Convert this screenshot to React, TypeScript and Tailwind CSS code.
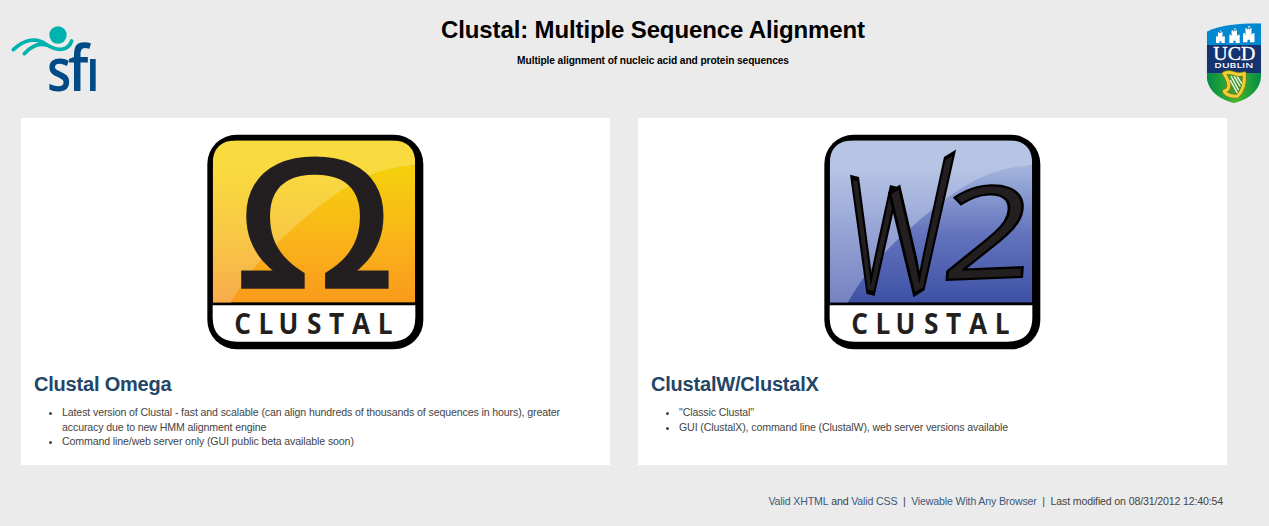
import type { ReactNode } from "react";

function SfiLogo() {
  return (
    <svg className="overflow-visible" width="120" height="90" viewBox="0 0 360 270" role="img" aria-label="sfi">
      <circle cx="174" cy="60" r="26" fill="#00b2ae" />
      <g fill="none" stroke="#00b2ae" strokeWidth="11" strokeLinecap="round">
        <path d="M40 104 C76 70 112 68 138 88 C172 111 204 108 215 78" />
        <path d="M73 116 C94 93 118 84 140 90" />
      </g>
      <g fill="#004b87" fontFamily="'Open Sans', sans-serif" fontWeight="600">
        <text transform="translate(141 229) scale(.83 1)" fontSize="180">s</text>
        <text transform="translate(204 229) scale(.9 1)" fontSize="188">f</text>
        <text transform="translate(258 229) scale(.82 1)" fontSize="180">ı</text>
      </g>
    </svg>
  );
}

function Tower({ x, y, scale }: { x: number; y: number; scale: number }) {
  return (
    <g transform={`translate(${x} ${y}) scale(${scale})`} fill="#fff">
      <path d="M0 10h4v2h4v-2h7v2h4v-2h4v18H14v-5H9v5H0z" />
      <path d="M5 0h3v2h6v-2h3v12H5z" />
      <path d="M11 -5l5 2-4 1v5h-1z" />
    </g>
  );
}

function UcdCrest() {
  return (
    <svg className="overflow-visible" width="79" height="95" viewBox="0 0 237 285" role="img" aria-label="UCD Dublin">
      <defs>
        <clipPath id="shield">
          <path d="M50 50 C92 30 145 25 213 25 V181 C213 222 180 253 132 264 C84 253 50 224 50 181 Z" />
        </clipPath>
        <linearGradient id="green" x1="0" x2="1">
          <stop offset="0" stopColor="#008c45" />
          <stop offset=".55" stopColor="#45b52e" />
          <stop offset="1" stopColor="#008c45" />
        </linearGradient>
      </defs>
      <g clipPath="url(#shield)">
        <rect x="50" y="20" width="163" height="75" fill="#0089d0" />
        <rect x="50" y="90" width="163" height="86" fill="#14336f" />
        <rect x="50" y="175" width="163" height="90" fill="url(#green)" />
      </g>
      <Tower x={78} y={52} scale={1.15} />
      <Tower x={118} y={46} scale={1.35} />
      <Tower x={159} y={40} scale={1.5} />
      <text x="70" y="136" fill="#fff" stroke="#fff" strokeWidth="1" fontFamily="'Liberation Serif', serif" fontSize="59" textLength="126" lengthAdjust="spacingAndGlyphs">UCD</text>
      <text x="73" y="158" fill="#fff" fontFamily="'Open Sans', sans-serif" fontWeight="600" fontSize="22" textLength="117" lengthAdjust="spacingAndGlyphs">DUBLIN</text>
      <g fill="none" strokeLinecap="round" strokeLinejoin="round">
        <path d="M102 176 C122 162 137 188 163 176 C165 205 157 230 143 243 C126 246 106 239 103 228 C120 226 122 204 102 176" fill="#3d9a35" stroke="#7d8214" strokeWidth="14" />
        <path d="M124 185L145 224M133 185L150 213M142 186L155 205M121 196L141 232" stroke="#f4f7e6" strokeWidth="4" />
        <path d="M102 176 C122 162 137 188 163 176 C165 205 157 230 143 243 C126 246 106 239 103 228 C120 226 122 204 102 176" stroke="#f3cf36" strokeWidth="9" />
      </g>
    </svg>
  );
}

type BadgeProps = {
  id: string;
  label: string;
  base: [string, string, string];
  gloss: [string, string, string];
  children: ReactNode;
};

function ClustalBadge({ id, label, base, gloss, children }: BadgeProps) {
  return (
    <svg className="ml-[179px] block overflow-visible" width="230" height="230" viewBox="0 0 690 690" role="img" aria-label={label}>
      <defs>
        <linearGradient id={`${id}-base`} x1="0" y1="0" x2="0" y2="1">
          <stop offset="0" stopColor={base[0]} />
          <stop offset=".5" stopColor={base[1]} />
          <stop offset="1" stopColor={base[2]} />
        </linearGradient>
        <linearGradient id={`${id}-gloss`} x1="0" y1="0" x2="0" y2="1">
          <stop offset=".15" stopColor={gloss[0]} />
          <stop offset=".55" stopColor={gloss[1]} />
          <stop offset="1" stopColor={gloss[2]} />
        </linearGradient>
        <clipPath id={`${id}-inner`}>
          <path d="M38 533 V118 Q38 46 110 46 H575 Q646 46 646 118 V533 Z" />
        </clipPath>
      </defs>
      <rect x="22" y="29" width="648" height="644" rx="88" fill="#000" />
      <path d="M38 541 H646 V577 Q646 650 572 650 H112 Q38 650 38 577 Z" fill="#fff" />
      <g clipPath={`url(#${id}-inner)`}>
        <rect x="38" y="122" width="608" height="411" fill={`url(#${id}-base)`} />
        <path d="M38 46 H646 V122 C510 122 405 202 300 292 C205 373 145 440 92 533 H38 Z" fill={`url(#${id}-gloss)`} />
      </g>
      {children}
      <text
        transform="translate(0 627) scale(.95 1)"
        x="108 185 248 338 407 480 561"
        fill="#231f20"
        fontFamily="'Open Sans', sans-serif"
        fontWeight="700"
        fontSize="83"
      >
        CLUSTAL
      </text>
    </svg>
  );
}

function Card({ badge, title, items }: { badge: ReactNode; title: string; items: string[] }) {
  return (
    <section className="h-[347px] w-[589px] bg-white pt-[7px]">
      {badge}
      <h2 className="mt-[17px] ml-[13px] text-[20px] leading-[24px] font-bold tracking-[-0.2px] text-[#234567]">{title}</h2>
      <ul className="mt-[9px] ml-[41px] w-[520px] list-disc text-[10.6px] leading-[14.5px] tracking-[-0.12px] text-[#444]">
        {items.map((item) => (
          <li key={item}>{item}</li>
        ))}
      </ul>
    </section>
  );
}

export default function App() {
  return (
    <div className="h-[526px] w-[1269px] overflow-hidden bg-[#ebebeb] font-['Liberation_Sans',Arial,sans-serif]">
      <header className="flex h-[118px] items-start justify-between">
        <div className="w-[120px] pt-[15px]"><SfiLogo /></div>
        <div className="ml-[-4px] pt-[15px] text-center text-black">
          <h1 className="text-[24px] leading-[30px] font-bold tracking-[-0.13px]">Clustal: Multiple Sequence Alignment</h1>
          <p className="mt-[9px] text-[10.2px] leading-[13px] font-bold tracking-[-0.09px]">Multiple alignment of nucleic acid and protein sequences</p>
        </div>
        <div className="w-[79px] pt-[15px]"><UcdCrest /></div>
      </header>
      <main className="flex gap-[28px] pl-[21px]">
        <Card
          title="Clustal Omega"
          items={[
            "Latest version of Clustal - fast and scalable (can align hundreds of thousands of sequences in hours), greater accuracy due to new HMM alignment engine",
            "Command line/web server only (GUI public beta available soon)",
          ]}
          badge={
            <ClustalBadge id="omega" label="Clustal Omega" base={["#f5d10b", "#f9b619", "#f99a1c"]} gloss={["#f9db3f", "#f8ca44", "#f8ac4c"]}>
              <text transform="translate(344 482) scale(1.15 1)" textAnchor="middle" fill="#231f20" stroke="#231f20" strokeWidth="16" fontFamily="'Open Sans', sans-serif" fontSize="523">Ω</text>
            </ClustalBadge>
          }
        />
        <Card
          title="ClustalW/ClustalX"
          items={['"Classic Clustal"', "GUI (ClustalX), command line (ClustalW), web server versions available"]}
          badge={
            <ClustalBadge id="classic" label="ClustalW2" base={["#a4b6de", "#6373bd", "#3f51a5"]} gloss={["#b7c5e5", "#97a5d6", "#7682c0"]}>
              <g transform="translate(-6 0)" fill="#231f20" stroke="#000" fontFamily="'Liberation Sans', sans-serif" fontSize="100">
                <text transform="matrix(2.1 .53 -.166 4.77 97 485.4)" strokeWidth="3.5" vectorEffect="non-scaling-stroke">V</text>
                <text transform="matrix(2.95 -1.85 -.13 5.18 214 561.6)" strokeWidth="3.5" vectorEffect="non-scaling-stroke">V</text>
                <text transform="matrix(4.8 -.2 -.3 3.85 372 466)" strokeWidth="2.5" vectorEffect="non-scaling-stroke" fontFamily="'Open Sans', sans-serif" fontWeight="500">2</text>
              </g>
            </ClustalBadge>
          }
        />
      </main>
      <footer className="mt-[28px] flex justify-end pr-[46px] text-[10.6px] leading-[16px] tracking-[-0.15px] whitespace-pre text-[#444]">
        <a className="text-[#3d5878]">Valid XHTML</a> and <a className="text-[#3d5878]">Valid CSS</a>{"  |  "}
        <a className="text-[#3d5878]">Viewable With Any Browser</a>{"  |  "}Last modified on 08/31/2012 12:40:54
      </footer>
    </div>
  );
}
